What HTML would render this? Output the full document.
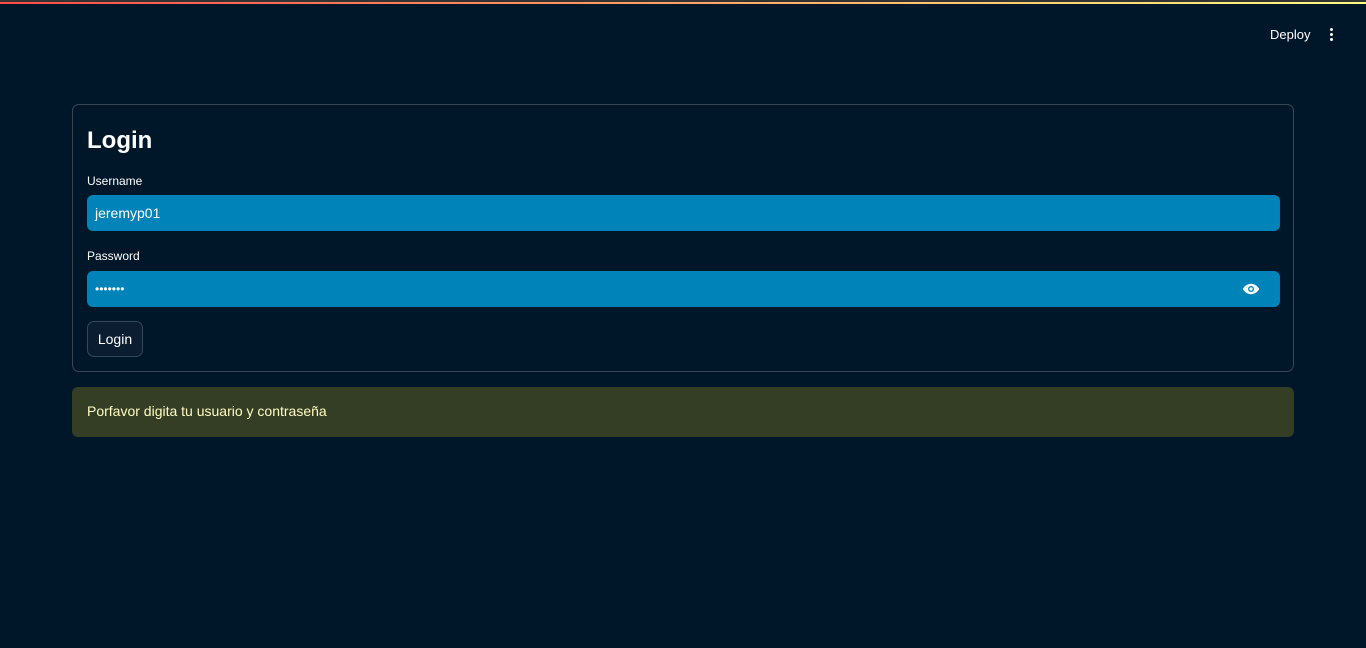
<!DOCTYPE html>
<html><head><style>
*{box-sizing:border-box;margin:0;padding:0}
body{width:1366px;height:648px;background:#001629;font-family:"Liberation Sans",sans-serif;color:#fff;position:relative;overflow:hidden}
.topbar{position:absolute;top:0;left:0;width:100%;height:4px;background:#333}
.topbar div{position:absolute;top:2px;left:0;right:0;height:2px;background:linear-gradient(90deg,#ff4b4b,#fffd80)}
.deploy{position:absolute;left:1270px;top:27px;font-size:13px}
.dots{position:absolute;left:1330px;top:28px}
.dots i{display:block;width:3px;height:3px;background:#fff;border-radius:50%;margin-bottom:2px}
.card{position:absolute;left:72px;top:104px;width:1222px;height:268px;border:1px solid #3a4656;border-radius:7px}
h1{position:absolute;left:14px;top:22px;font-size:24px;font-weight:bold}
.lbl{position:absolute;left:14px;font-size:12px}
.inp{position:absolute;left:14px;width:1193px;height:36px;background:#0083b9;border-radius:6px;font-size:14px;padding:10px 8px}
.btn{position:absolute;left:14px;top:216px;width:56px;height:36px;border:1px solid #35475a;border-radius:7px;background:#0b1d30;font-size:14px;text-align:center;line-height:34px}
.warn{position:absolute;left:72px;top:387px;width:1222px;height:50px;background:#343e24;border-radius:6px;color:#fffcc2;font-size:14px;padding:16px 15px}
</style></head><body>
<div class="topbar"><div></div></div>
<div class="deploy">Deploy</div>
<div class="dots"><i></i><i></i><i></i></div>
<div class="card">
<h1>Login</h1>
<div class="lbl" style="top:69px">Username</div>
<div class="inp" style="top:90px">jeremyp01</div>
<div class="lbl" style="top:144px">Password</div>
<div class="inp" style="top:166px;font-size:12px;padding-top:11px">•••••••
<svg style="position:absolute;right:20px;top:11px" width="18" height="14" viewBox="0 0 24 16"><path d="M12 1C7 1 3 4.5 1 8c2 3.5 6 7 11 7s9-3.5 11-7c-2-3.5-6-7-11-7z" fill="#fff"/><circle cx="12" cy="8" r="4" fill="#0083b9"/><circle cx="12" cy="8" r="2.2" fill="#fff"/></svg></div>
<div class="btn">Login</div>
</div>
<div class="warn">Porfavor digita tu usuario y contraseña</div>
</body></html>
